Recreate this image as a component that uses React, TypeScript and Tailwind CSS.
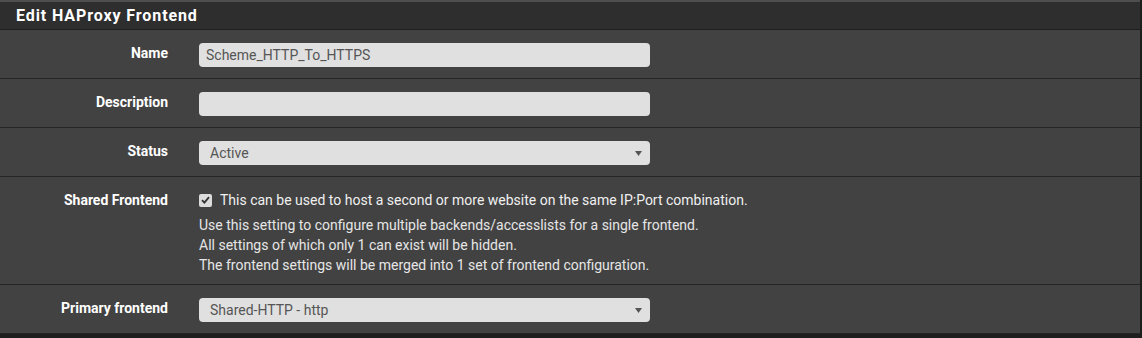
import * as React from "react"

// Simple label + control row used in the edit form
function FormRow({
  label,
  children,
  className = "h-[49px]",
}: {
  label: string
  children: React.ReactNode
  className?: string
}) {
  return (
    <div className={`flex border-b border-[#262626] bg-[#424242] ${className}`}>
      <div className="w-[168px] shrink-0 pt-[14px] text-right text-[14px] font-bold leading-[18px] text-white">
        {label}
      </div>
      <div className="ml-[31px] pt-[13px]">{children}</div>
    </div>
  )
}

function TextInput({ value }: { value?: string }) {
  return (
    <div className="flex h-[24px] w-[451px] items-center rounded-[4px] bg-[#e0e0e0] px-[7px] text-[14px] text-[#555555]">
      {value}
    </div>
  )
}

function SelectBox({ value }: { value: string }) {
  return (
    <div className="flex h-[24px] w-[451px] items-center justify-between rounded-[4px] bg-[#e0e0e0] pl-[11px] pr-[8px] text-[14px] text-[#555555]">
      <span>{value}</span>
      <svg width="7" height="5" viewBox="0 0 7 5">
        <path d="M0 0 H7 L3.5 5 Z" fill="#555555" />
      </svg>
    </div>
  )
}

export default function App() {
  return (
    <div className="flex h-[338px] w-[1142px] bg-[#1e1e1e] font-['Roboto','Liberation_Sans',sans-serif]">
      <div className="w-[1140px]">
        {/* panel heading */}
        <div className="h-[30px] border-t-2 border-b border-t-[#4e4e4e] border-b-[#1f1f1f] bg-[#2e2e2e] pl-[16px] text-[16px] font-bold leading-[27px] tracking-[0.9px] text-white">
          Edit HAProxy Frontend
        </div>

        <FormRow label="Name">
          <TextInput value="Scheme_HTTP_To_HTTPS" />
        </FormRow>
        <FormRow label="Description">
          <TextInput />
        </FormRow>
        <FormRow label="Status">
          <SelectBox value="Active" />
        </FormRow>

        <FormRow label="Shared Frontend" className="h-[108px]">
          <div className="flex items-center gap-[8px] text-[14px] leading-[20px] text-[#f0f0f0]">
            <span className="flex h-[13px] w-[13px] items-center justify-center rounded-[2px] bg-[#dcdcdc]">
              <svg width="9" height="8" viewBox="0 0 9 8">
                <path d="M1 4.2 L3.4 6.6 L8 1.2" stroke="#333" strokeWidth="1.8" fill="none" />
              </svg>
            </span>
            This can be used to host a second or more website on the same IP:Port combination.
          </div>
          <div className="mt-[5px] text-[14px] leading-[20px] text-[#e6e6e6]">
            <div>Use this setting to configure multiple backends/accesslists for a single frontend.</div>
            <div>All settings of which only 1 can exist will be hidden.</div>
            <div>The frontend settings will be merged into 1 set of frontend configuration.</div>
          </div>
        </FormRow>

        <FormRow label="Primary frontend">
          <SelectBox value="Shared-HTTP - http" />
        </FormRow>
      </div>
    </div>
  )
}
